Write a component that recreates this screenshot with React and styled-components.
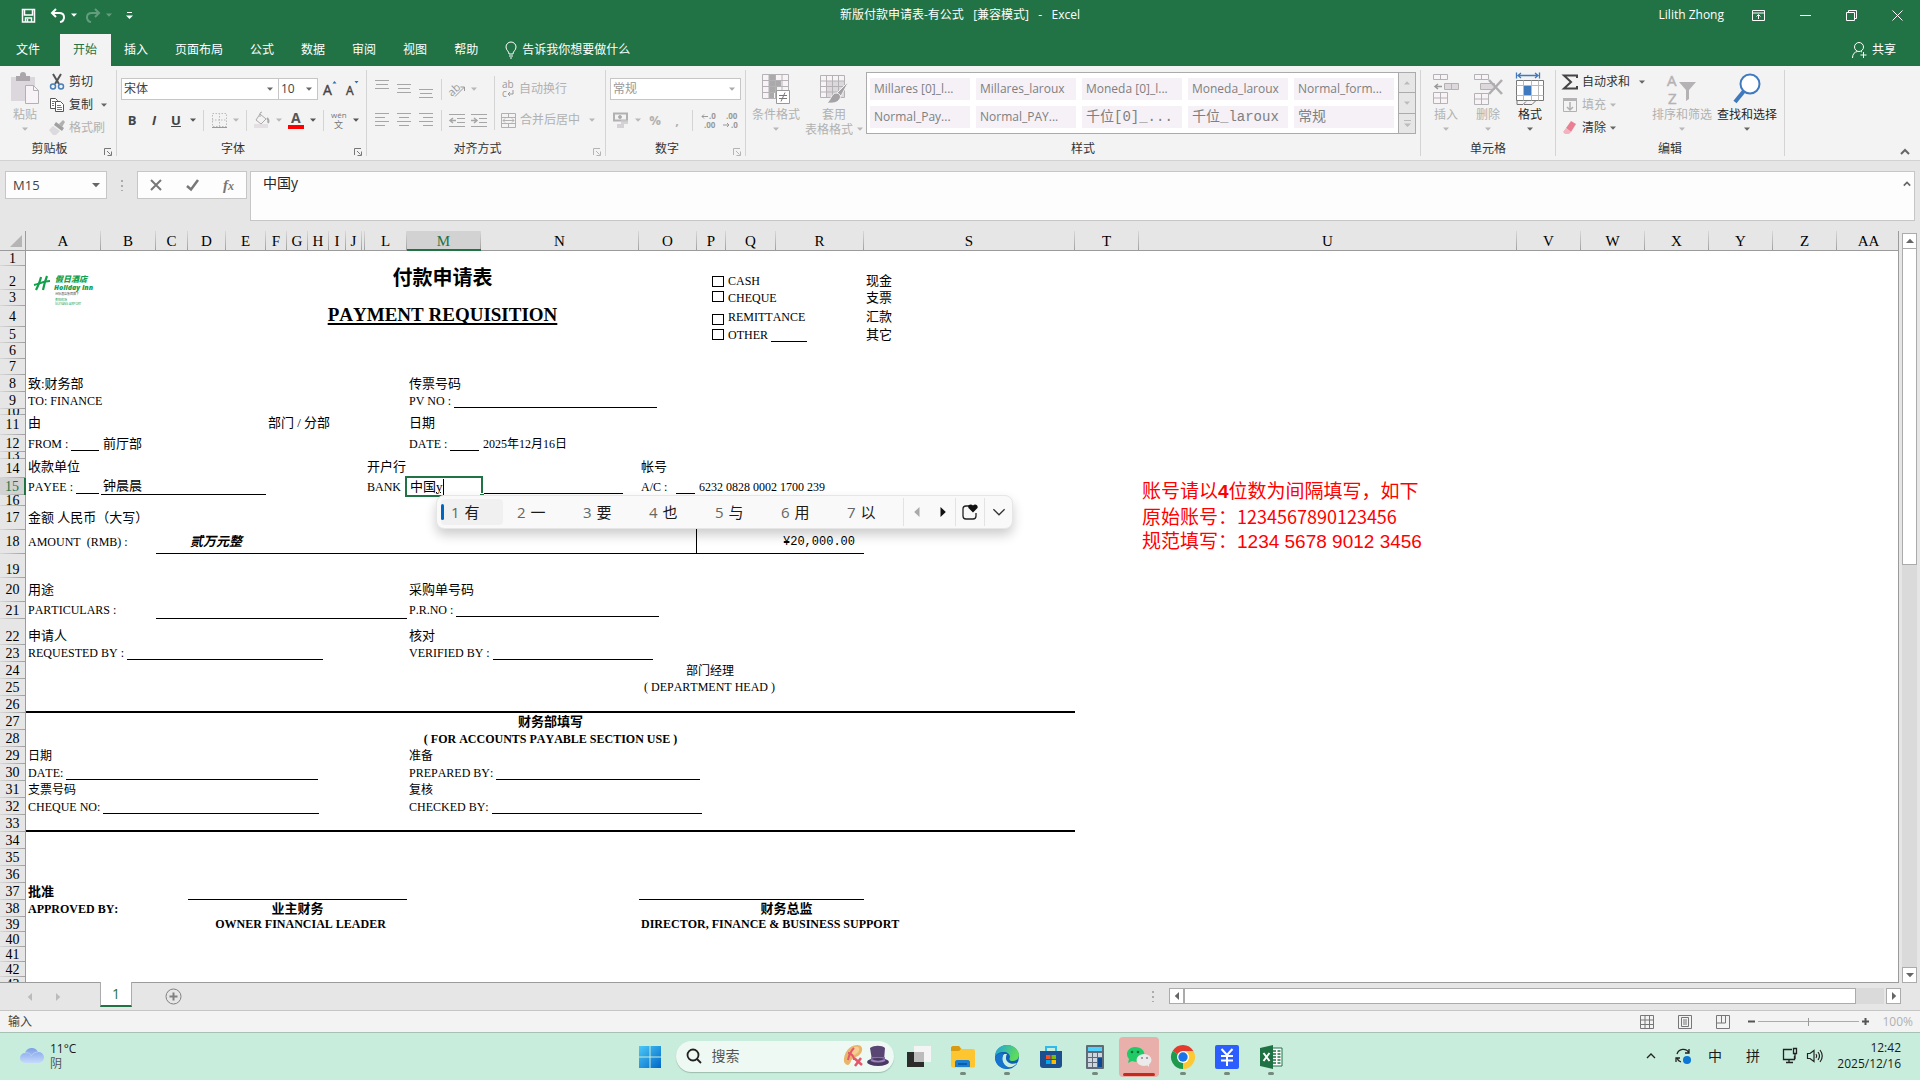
import React from "react";
import styled, { createGlobalStyle, css } from "styled-components";

const ui = `"Open Sans", "Noto Sans CJK SC", sans-serif`;
const serif = `"Liberation Serif", "Noto Sans CJK SC", serif`;
const mono = `"Liberation Mono", "Noto Sans CJK SC", monospace`;

const GlobalStyle = createGlobalStyle`
  *, *::before, *::after { box-sizing: border-box; }
  body { margin: 0; font: 12px/16px ${ui}; color: #262626; overflow: hidden; }
  button { font: inherit; color: inherit; padding: 0; border: 0; background: none; }
  input, select, textarea { font: inherit; color: inherit; border: 0; padding: 0; margin: 0; background: none; outline: 0; }
  select { appearance: none; }
  svg { display: block; flex: none; overflow: visible; }
`;

const Window = styled.div`
  display: flex;
  flex-direction: column;
  height: 100vh;
`;

/* ---------- title bar and tabs ---------- */

const TitleBar = styled.header`
  display: grid;
  grid-template-columns: 1fr auto 1fr;
  align-items: center;
  height: 34px;
  padding: 0 17px 4px;
  background: #217346;
  color: #fff;
`;

const QuickTools = styled.div`
  display: flex;
  align-items: center;
  gap: ${pr => pr.gap}px;
  padding-left: 4px;
  justify-content: ${pr => (pr.end ? "flex-end" : "flex-start")};
`;

const QuickButton = styled.button`
  display: flex;
  align-items: center;
  gap: 5px;
  ${pr => pr.faded && css`opacity: 0.3; margin-left: -6px;`}
`;

const UserName = styled.span`
  margin-right: -7px;
`;

const DocTitle = styled.h1`
  margin: 0;
  font-size: 12px;
  font-weight: 400;
  white-space: pre;
`;

const TabBar = styled.nav`
  display: flex;
  align-items: stretch;
  height: 32px;
  padding-left: 3px;
  background: #217346;
  color: #fff;
`;

const Tab = styled.button`
  padding: 0 14px 1px 13px;
  ${pr => pr.first && css`margin-right: 6px;`}
  ${pr => pr.active && css`background: #f3f3f3; color: #217346;`}
`;

const TellMe = styled.button`
  display: flex;
  align-items: center;
  gap: 5px;
  margin-left: 13px;
`;

const Share = styled(TellMe)`
  margin-left: auto;
  margin-right: 24px;
`;

/* ---------- ribbon ---------- */

const Ribbon = styled.div`
  display: flex;
  height: 95px;
  background: #f3f3f3;
  border-bottom: 1px solid #d2d2d2;
`;

const Group = styled.section`
  display: flex;
  flex-direction: column;
  position: relative;
  width: ${pr => pr.w}px;
  margin: 4px 0;
  border-right: 1px solid #d4d4d4;
`;

const GroupBody = styled.div`
  display: flex;
  flex: none;
  height: 71px;
  padding-left: ${pr => pr.pad || 4}px;
`;

const GroupLabel = styled.div`
  display: flex;
  justify-content: center;
  padding-right: ${pr => (pr.launch ? 17 : 0)}px;
  color: #333;
`;

const Launcher = styled.button`
  position: absolute;
  right: 4px;
  bottom: 0;
  opacity: ${pr => (pr.off ? 0.5 : 1)};
`;

const Rows = styled.div`
  display: flex;
  flex-direction: column;
  gap: 9px;
  padding-top: 8px;
`;

const ToolRow = styled.div`
  display: flex;
  align-items: center;
  height: 22px;
`;

const Tool = styled.button`
  display: flex;
  align-items: center;
  justify-content: center;
  width: 22px;
  height: 22px;
  color: ${pr => (pr.off ? "#b1b1b1" : "#444")};
  font-size: ${pr => (pr.bold ? 13 : 14)}px;
  font-weight: ${pr => (pr.bold ? 700 : 400)};
  font-style: ${pr => (pr.italic ? "italic" : "normal")};
  text-decoration: ${pr => (pr.under ? "underline" : "none")};
`;

const DropBox = styled.button`
  display: flex;
  align-items: center;
  justify-content: center;
  width: 12px;
  height: 12px;
`;

const Sep = styled.span`
  width: 1px;
  height: ${pr => pr.h || 21}px;
  margin: ${pr => pr.m || "0 4px"};
  background: #d4d4d4;
`;

const Combo = styled.label`
  display: flex;
  align-items: center;
  width: ${pr => pr.w}px;
  height: 22px;
  padding: 0 5px 0 2px;
  margin-left: ${pr => (pr.joined ? -1 : 0)}px;
  border: 1px solid #c6c6c6;
  background: #fff;
  color: ${pr => (pr.off ? "#999" : "#444")};

  select { flex: 1; min-width: 0; }
`;

const Stack = styled.div`
  display: flex;
  flex-direction: column;
  width: ${pr => pr.w}px;
  margin-left: ${pr => (pr.spaced ? 3 : 0)}px;
`;

const SmallButton = styled.button`
  display: flex;
  align-items: center;
  gap: 4px;
  height: ${pr => pr.h || 23}px;
  color: ${pr => (pr.off ? "#b1b1b1" : "#333")};
  white-space: nowrap;

  span { margin-right: ${pr => pr.push || 0}px; }
`;

const BigButton = styled.button`
  display: flex;
  flex-direction: column;
  align-items: center;
  width: ${pr => pr.w}px;
  color: ${pr => (pr.off ? "#b1b1b1" : "#262626")};
  line-height: 15px;
  white-space: nowrap;
`;

const BigIcon = styled.span`
  display: flex;
  align-items: center;
  height: 33px;
  margin: 2px 0;
`;

const ArrowLine = styled.span`
  display: flex;
  align-items: center;
  gap: 4px;
  height: 14px;
`;

const Gallery = styled.div`
  display: grid;
  grid-template-columns: repeat(5, 100px) 16px;
  grid-template-rows: 22px 22px;
  gap: 6px;
  width: 548px;
  height: 62px;
  margin: 2px 0 0 2px;
  padding: 5px 0 0 3px;
  border: 1px solid #ababab;
  background: #fff;
`;

const StyleCell = styled.button`
  padding-left: 4px;
  background: #f5f1f7;
  color: #7f7f7f;
  text-align: left;
  white-space: pre;
  ${pr => pr.song && css`font: 14px/20px ${mono};`}
`;

const GalleryScroll = styled.div`
  display: flex;
  flex-direction: column;
  grid-column: 6;
  grid-row: 1 / 3;
  height: 62px;
  margin: -6px 0 0 -2px;
  border: 1px solid #ababab;
  background: #e6e6e6;

  button {
    display: flex;
    flex: 1;
    align-items: center;
    justify-content: center;
    border-bottom: 1px solid #ababab;
  }
  button:last-child { border-bottom: 0; }
`;

const CollapseButton = styled.button`
  display: flex;
  align-self: flex-end;
  margin: 0 10px 3px auto;
`;

/* ---------- formula bar ---------- */

const FormulaBar = styled.div`
  display: flex;
  align-items: flex-start;
  height: 70px;
  padding: 10px 5px 0;
  background: #e6e6e6;
`;

const NameBox = styled.label`
  display: flex;
  align-items: center;
  width: 102px;
  height: 28px;
  padding: 0 6px 0 7px;
  border: 1px solid #c6c6c6;
  background: #fdfdfd;
  color: #444;

  input { flex: 1; min-width: 0; font-size: 13px; }
`;

const Dots = styled.span`
  width: 2px;
  height: 11px;
  margin: ${pr => pr.m};
  background: repeating-linear-gradient(#ababab 0 2px, transparent 2px 5px);
`;

const FormulaButtons = styled.div`
  display: flex;
  align-items: center;
  justify-content: space-around;
  width: 110px;
  height: 28px;
  border: 1px solid #c6c6c6;
  background: #fdfdfd;
`;

const FxButton = styled.button`
  font: italic 700 15px/20px "Liberation Serif", serif;
  color: #777;
  sub { font-size: 12px; vertical-align: baseline; }
`;

const FormulaInput = styled.div`
  display: flex;
  flex: 1;
  height: 50px;
  margin-left: 3px;
  padding: 1px 3px 0 12px;
  border: 1px solid #c6c6c6;
  background: #fdfdfd;

  textarea { flex: 1; resize: none; font-size: 14px; line-height: 20px; overflow: hidden; }
  button { align-self: flex-start; margin-top: 7px; }
`;

/* ---------- sheet ---------- */

const SheetArea = styled.div`
  display: flex;
  flex: 1;
  min-height: 0;
  background: #e6e6e6;
`;

const SheetView = styled.main`
  flex: 1;
  min-width: 0;
  overflow: hidden;
  border-right: 1px solid #9b9b9b;
  border-bottom: 1px solid #9b9b9b;
  background: linear-gradient(#e6e6e6 20px, #fff 20px);
`;

const Grid = styled.table`
  table-layout: fixed;
  border-collapse: collapse;
  font-family: ${serif};
  font-kerning: none;
  color: #000;

  td, th { padding: 0; font-weight: 400; }
  td { position: relative; }
`;

const ColHead = styled.div`
  height: 20px;
  padding-right: 1px;
  border-bottom: ${pr => (pr.active ? "2px solid #217346" : "1px solid #9b9b9b")};
  background: linear-gradient(#d8d8d8, #a0a0a0) right / 1px 100% no-repeat ${pr => (pr.active ? "#d2d2d2" : "#e6e6e6")};
  color: ${pr => (pr.active ? "#217346" : "#000")};
  font-size: 15px;
  line-height: 21px;
  text-align: center;
`;

const Corner = styled.div`
  display: flex;
  align-items: flex-end;
  justify-content: flex-end;
  height: 20px;
  padding: 0 3px 3px 0;
  border-right: 1px solid #9b9b9b;
  border-bottom: 1px solid #9b9b9b;
  background: #e6e6e6;
`;

const RowHead = styled.div`
  display: flex;
  align-items: ${pr => (pr.low ? "flex-end" : "center")};
  justify-content: center;
  height: ${pr => pr.h}px;
  overflow: hidden;
  border-right: ${pr => (pr.active ? "2px solid #217346" : "1px solid #9b9b9b")};
  background: linear-gradient(90deg, #d8d8d8, #a0a0a0) bottom / 100% 1px no-repeat ${pr => (pr.active ? "#d2d2d2" : "#e6e6e6")};
  color: ${pr => (pr.active ? "#217346" : "#000")};
  font-size: 14px;
  line-height: 16px;
`;

const Cell = styled.div`
  display: flex;
  align-items: ${pr => (pr.low ? "flex-end" : "center")};
  justify-content: ${pr => pr.align || "flex-start"};
  height: ${pr => pr.h}px;
  padding: 0 ${pr => (pr.money ? 9 : 2)}px ${pr => pr.lift || 0}px;
  border-bottom: ${pr => pr.line || 0}px solid #000;
  border-right: ${pr => (pr.edge ? 1 : 0)}px solid #000;
  font-size: 12px;
  line-height: 16px;
  font-weight: ${pr => (pr.bold ? 700 : 400)};
  font-style: ${pr => (pr.italic ? "italic" : "normal")};
  white-space: pre;
  ${pr => pr.cn && css`font-size: 13px;`}
  ${pr => pr.money && css`font-family: ${mono};`}
  ${pr => pr.title && css`font-size: 20px; font-weight: 700;`}
  ${pr => pr.subtitle && css`
    font-size: 19px;
    font-weight: 700;
    text-decoration: underline 2px;
    text-underline-offset: 2px;
    text-decoration-skip-ink: none;
  `}
`;

/* writing line after a label; fills the cell when no length is given */
const Blank = styled.span`
  flex: ${pr => (pr.fill ? "1" : "none")};
  align-self: flex-end;
  height: 1px;
  margin-bottom: 1px;
  background: #000;
`;

const Tick = styled.input`
  appearance: none;
  width: 12px;
  height: 11px;
  margin: 0 0 2px;
  border: 1px solid #000;
  background: #fff;
`;

const Editing = styled.div`
  position: absolute;
  inset: -2px;
  z-index: 2;
  display: flex;
  align-items: center;
  padding-left: 3px;
  border: 2px solid #217346;
  background: #fff;
  font-size: 13px;
  line-height: 16px;

  u { text-decoration: underline dotted 1px; border-right: 1px solid #000; }
`;

const FillHandle = styled.span`
  position: absolute;
  right: -3px;
  bottom: -2px;
  width: 5px;
  height: 4px;
  border: 1px solid #fff;
  border-width: 1px 0 0 1px;
  background: #217346;
`;

const Logo = styled.svg`
  position: absolute;
  left: 8px;
  top: 9px;
`;

const RedNote = styled.div`
  position: absolute;
  left: 3px;
  top: 2px;
  z-index: 1;
  color: #f00;
  font: 19px/24px "Liberation Sans", "Noto Sans CJK SC", sans-serif;
  white-space: nowrap;

  p { margin: 0; }
  span { font-family: "Noto Sans CJK SC", sans-serif; font-size: 18px; }
`;

/* input method candidate window */
const Candidates = styled.div`
  position: absolute;
  left: 29px;
  top: 17px;
  z-index: 3;
  display: flex;
  align-items: center;
  width: 577px;
  height: 34px;
  padding-left: 4px;
  border-radius: 8px;
  background: #f9f9f9;
  border: 1px solid #e6e6e6;
  box-shadow: 0 6px 12px rgba(0, 0, 0, 0.2);
  color: #1a1a1a;
  font: 15px/20px ${ui};
`;

const Candidate = styled.button`
  display: flex;
  flex: none;
  align-items: center;
  gap: 5px;
  width: 62px;
  height: 26px;
  margin-right: 4px;
  padding-left: ${pr => (pr.active ? 0 : 10)}px;
  border-radius: 4px;
  background: ${pr => (pr.active ? "#f0f0f0" : "none")};

  i { color: #666; font-style: normal; }
  ${pr => pr.active && css`
    &::before { content: ""; width: 3px; height: 16px; margin-right: 2px; border-radius: 2px; background: #0067c0; }
  `}
`;

const CandidateTool = styled.button`
  display: flex;
  align-items: center;
  justify-content: center;
  width: ${pr => pr.w}px;
  height: 28px;
  border-left: ${pr => (pr.lined ? 1 : 0)}px solid #e3e3e3;
`;

const VScroll = styled.div`
  display: flex;
  flex-direction: column;
  width: 15px;
  margin: 2px 3px 0 3px;
`;

const ScrollButton = styled.button`
  display: flex;
  align-items: center;
  justify-content: center;
  width: 15px;
  height: 16px;
  border: 1px solid #ababab;
  background: #fff;
`;

const VTrack = styled.div`
  flex: 1;
  background: #dadada;

  div { height: 44%; border: 1px solid #ababab; border-top: 0; background: #fff; }
`;

/* ---------- sheet tabs and status ---------- */

const SheetTabs = styled.div`
  display: flex;
  height: 27px;
  padding-left: 26px;
  background: #e6e6e6;
`;

const SheetNav = styled.div`
  display: flex;
  gap: 20px;
  align-items: center;
  width: 74px;
`;

const SheetTab = styled.button`
  width: 32px;
  height: 25px;
  margin-top: -1px;
  border: 1px solid #ababab;
  border-top: 0;
  border-bottom: 2px solid #217346;
  background: #fff;
  color: #217346;
  font-size: 14px;
`;

const AddSheet = styled.button`
  display: flex;
  align-items: center;
  margin-left: 33px;
`;

const HScroll = styled.div`
  display: flex;
  width: 732px;
  height: 16px;
  margin: 5px 19px 0 15px;

  button:last-child { margin-left: 2px; }
`;

const HTrack = styled.div`
  flex: 1;
  background: #dadada;

  div { width: 96%; height: 16px; border: 1px solid #ababab; background: #fff; }
`;

const StatusBar = styled.footer`
  display: flex;
  align-items: center;
  height: 22px;
  padding: 0 7px 0 8px;
  border-top: 1px solid #c6c6c6;
  background: #f3f3f3;
  color: #444;
`;

const ViewButtons = styled.div`
  display: flex;
  gap: 24px;
  margin: 0 18px 0 auto;
`;

const ZoomSlider = styled.input`
  appearance: none;
  width: 101px;
  height: 8px;
  margin: 0 3px;
  background:
    linear-gradient(#999, #999) center / 1px 8px no-repeat,
    linear-gradient(#ababab, #ababab) center / 100% 1px no-repeat;

  &::-webkit-slider-thumb { appearance: none; width: 1px; height: 8px; background: #999; }
`;

const ZoomValue = styled.span`
  margin-left: 13px;
  color: #b1b1b1;
`;

/* ---------- taskbar ---------- */

const Taskbar = styled.div`
  display: grid;
  grid-template-columns: 1fr auto 1fr;
  height: 48px;
  border-top: 1px solid #a6c2b4;
  background: #c8eddd;
  color: #1a1a1a;
  font-size: 12px;
`;

const Weather = styled.button`
  display: flex;
  align-items: center;
  gap: 6px;
  padding: 0 0 2px 19px;
  line-height: 15px;
  text-align: left;

  small { display: block; font-size: 12px; color: #555; }
`;

const Apps = styled.div`
  display: flex;
  align-items: center;
  padding-left: 10px;
`;

const Search = styled.label`
  display: flex;
  align-items: center;
  width: 218px;
  height: 31px;
  margin: 0 3px 1px 14px;
  padding: 0 5px 0 10px;
  border-radius: 16px;
  background: #eff9f4;
  box-shadow: 0 1px 1px #9cbdae;

  input { flex: 1; min-width: 0; margin-left: 10px; font-size: 14px; }
  input::placeholder { color: #555; opacity: 1; }
`;

const AppButton = styled.button`
  display: flex;
  flex-direction: column;
  align-items: center;
  justify-content: flex-end;
  width: 40px;
  height: 40px;
  margin: 0 2px;
  padding-bottom: ${pr => (pr.alert ? 1 : 2)}px;
  border-radius: 4px;
  background: ${pr => (pr.alert ? "#e8afab" : "none")};

  &::after {
    content: "";
    width: ${pr => (pr.alert ? 32 : 6)}px;
    height: 3px;
    margin-top: ${pr => (pr.alert ? 4 : 3)}px;
    border-radius: 2px;
    background: ${pr => (pr.alert ? "#c42b1c" : pr.open ? "#75897f" : "transparent")};
  }
`;

const Tray = styled.div`
  display: flex;
  align-items: center;
  justify-content: flex-end;
  padding: 0 19px 1px 0;
  font-size: 14px;
`;

const TrayButton = styled.button`
  display: flex;
  align-items: center;
  justify-content: center;
  width: ${pr => pr.w}px;
`;

const Clock = styled.time`
  width: 77px;
  font-size: 12px;
  line-height: 16px;
  text-align: right;
  white-space: pre-line;
`;

/* ---------- icons ---------- */

const Svg = ({ w = 16, h = w, box, children, ...rest }) => (
  <svg width={w} height={h} viewBox={box || `0 0 ${w} ${h}`} fill="none" stroke="currentColor" aria-hidden="true" {...rest}>
    {children}
  </svg>
);

const turns = { down: 0, left: 90, up: 180, right: 270 };

const Arrow = ({ dir = "down", color = "#666", s = 6 }) => (
  <Svg w={s} box="0 0 6 6">
    <path d="M0 1.500h6L3 4.700z" fill={color} stroke="none" transform={`rotate(${turns[dir]} 3 3)`} />
  </Svg>
);

const Drop = ({ off }) => (
  <DropBox aria-label="更多"><Arrow color={off ? "#b8b8b8" : "#555"} /></DropBox>
);

const Chevron = ({ up, s = 10, color = "#666", sw = 1.5 }) => (
  <Svg w={s} box="0 0 10 10" stroke={color} strokeWidth={sw}>
    <path d={up ? "M1 7l4-4 4 4" : "M1 3l4 4 4-4"} />
  </Svg>
);

const LaunchIcon = () => (
  <Svg w={8} stroke="#777"><path d="M.5 7V.5H7M3 3l3.500 3.500M7.500 3.500v4h-4" /></Svg>
);

const SaveIcon = () => (
  <Svg w={15} h={15} stroke="#fff" strokeWidth="1.500">
    <path d="M1.500 1.500h12v12.500h-12zM3.500 1.500v5.500h8V1.500M4.500 14v-4h6v4" />
    <path d="M6.500 11v3" />
  </Svg>
);

const UndoIcon = ({ flip }) => (
  <Svg w={16} h={15} stroke="#fff" strokeWidth="2">
    <g transform={flip ? "matrix(-1 0 0 1 16 0)" : undefined}>
      <path d="M6 1L2 5l4 4M2 5h7c7 0 6 8 1 9" />
    </g>
  </Svg>
);

const BulbIcon = () => (
  <Svg w={12} h={17} stroke="#fff"><path d="M4 12c0-3-3-3.500-3-7a5 5 0 0 1 10 0c0 3.500-3 4-3 7zM4 14h4M5 16h2" /></Svg>
);

const PersonIcon = () => (
  <Svg w={15} h={17} stroke="#fff"><circle cx="7" cy="5" r="4.500" /><path d="M.5 16c0-4 2-6 5-6.500M9 9.500l1 .5M11.500 10v6M8.500 13h6" /></Svg>
);

const PasteIcon = () => (
  <Svg w={28} h={32} stroke="none">
    <path d="M0 4h24v9h-9v15H0z" fill="#dcd7dc" />
    <path d="M5 3h4V2a3 3 0 0 1 6 0v1h4v5H5z" fill="#aaa6aa" />
    <path d="M14.500 12.500h8l5 5v13h-13z" fill="#f7f3f7" stroke="#b3b0b3" />
    <path d="M22.500 12.500v5h5" stroke="#b3b0b3" />
  </Svg>
);

const CutIcon = () => (
  <Svg w={16} stroke="#555" strokeWidth="2">
    <path d="M4 0l6 10M12 0L6 10" />
    <circle cx="4" cy="12.500" r="2.500" stroke="#4a7fb8" strokeWidth="1.500" />
    <circle cx="12" cy="12.500" r="2.500" stroke="#4a7fb8" strokeWidth="1.500" />
  </Svg>
);

const CopyIcon = () => (
  <Svg w={16} stroke="#555">
    <path d="M1.500 1.500h5l2 2v8h-7z" fill="#fff" />
    <path d="M6.500 4.500h5l3 3v7h-8z" fill="#fff" />
    <path d="M3 4.500h3M3 6.500h2M3 8.500h2M8 8.500h4M8 10.500h5M8 12.500h5" stroke="#4a7fb8" />
  </Svg>
);

const BrushIcon = () => (
  <Svg w={16} stroke="none"><path d="M10 4l4-4 2 2-3 5z" fill="#b0b0b0" /><path d="M7 2l8 6-2 3-8-6z" fill="#a0a0a0" /><path d="M4 6l7 5-4 4H4L0 10z" fill="#dcdadc" /></Svg>
);

const LinesIcon = ({ lines, top = 4 }) => (
  <Svg w={14} h={22} stroke="#a6a6a6">
    {lines.map(([x, len], i) => <path key={i} d={`M${x} ${top + i * 4 + 0.5}h${len}`} />)}
  </Svg>
);

const BordersIcon = () => (
  <Svg w={15} h={15} stroke="#bbb" strokeDasharray="1.500 1.500"><path d="M.5 .5h14v13H.5zM7.500 0v14M0 7h15" /><path d="M0 14.500h15" strokeDasharray="none" stroke="#999" /></Svg>
);

const FillIcon = () => (
  <Svg w={16} stroke="#aaa"><path d="M6 2l6 5-5 5-5-4zM6 5V1l2-1" /><path d="M13 6c2 2 2 3 1 5" strokeWidth="2" /><path d="M0 12h14v4H0z" fill="#e3dfe3" stroke="none" /></Svg>
);

const IndentIcon = ({ out }) => (
  <Svg w={16} h={13} stroke="#a6a6a6">
    <path d="M0 .5h16M8 4.500h8M8 8.500h8M0 12.500h16" />
    <path d={out ? "M7 6.500H1M4 4L1 6.500 4 9" : "M0 6.500h6M3 4l3 2.500L3 9"} strokeWidth="1.500" />
  </Svg>
);

const WrapGlyph = () => (
  <Svg w={14} h={18}>
    <text x="1" y="8" fontSize="10" fill="#999" stroke="none">ab</text>
    <text x="1" y="17" fontSize="10" fill="#999" stroke="none">c</text>
    <path d="M12 10v4H7M9 12l-2 2 2 2" stroke="#999" />
  </Svg>
);

const SlantIcon = () => (
  <Svg w={17}><text x="-1" y="12" fontSize="11" fill="#999" stroke="none" transform="rotate(-42 6 9)">ab</text><path d="M6 15.500L15.500 6M11.500 6h4v4" stroke="#999" /></Svg>
);

const MergeIcon = () => (
  <Svg w={15} h={15}><path d="M.5 .5h14v14H.5zM.5 4.500h14M.5 10.500h14M7.500 0v4M7.500 11v4M2 7.500h11M4 5.500l-2 2 2 2M11 5.500l2 2-2 2" /></Svg>
);

const MoneyIcon = () => (
  <Svg w={16}><path d="M1 1.500h13v7H1z" strokeWidth="2" /><circle cx="7" cy="5" r="1.500" fill="#aaa" /><path d="M8 9h7M8 11h7M4 13h7M4 15h7" stroke="#ccc7cc" strokeWidth="1.500" /></Svg>
);

const DecimalIcon = ({ less }) => (
  <Svg w={15} h={15}>
    <text x={less ? 3 : 8} y="6" fontSize="8" fontWeight="700" fill="#999" stroke="none">{less ? ".00" : ".0"}</text>
    <text x={less ? 8 : 3} y="15" fontSize="8" fontWeight="700" fill="#999" stroke="none">{less ? ".0" : ".00"}</text>
    <path d={less ? "M0 12h6M4 10l2 2-2 2" : "M7 3.500H1M3 1.500l-2 2 2 2"} stroke="#999" />
  </Svg>
);

const GrowIcon = ({ small }) => (
  <Svg w={15} h={16}>
    <text x={small ? 2 : 1} y="14" fontSize={small ? 12 : 14} fill="#444" stroke="#444" strokeWidth=".4">A</text>
    <path d={small ? "M10.500 0h4l-2 2.500z" : "M10.500 2.500h4l-2-2.500z"} fill="#2f6fb3" stroke="none" />
  </Svg>
);

const PinyinIcon = () => (
  <Svg w={18} h={20}>
    <text x="1" y="8" fontSize="8" fill="#777" stroke="none">wén</text>
    <text x="4" y="18" fontSize="9" fill="#777" stroke="none">文</text>
  </Svg>
);

const CondIcon = () => (
  <Svg w={30} h={32} stroke="#b5b2b5">
    <path d="M1.500 1.500h26v24h-26z" fill="#f7f3f7" />
    <path d="M8 2h6v6H8zM8 8h12v6H8zM8 14h8v6H8zM8 20h5v5H8z" fill="#aaa" stroke="none" />
    <path d="M1.500 7.500h26M1.500 13.500h26M1.500 19.500h26M8 1.500v24M14.500 1.500v24M21 1.500v24" />
    <path d="M15.500 17.500h13v13h-13z" fill="#fff" stroke="#999" />
    <path d="M18 22.500h8M18 25.500h8M24 19.500l-4 9" stroke="#777" />
  </Svg>
);

const TableFormatIcon = () => (
  <Svg w={30} h={30} stroke="#b5b2b5">
    <path d="M1.500 1.500h24v22h-24z" fill="#f7f3f7" />
    <path d="M7 7h18v16H7z" fill="#dcd8dc" stroke="none" />
    <path d="M1.500 7h24M1.500 12.500h24M1.500 18h24M7.500 1.500v22M13.500 1.500v22M19.500 1.500v22" />
    <path d="M30 7l-8 15-4-3z" fill="#a5a2a5" stroke="#f3f3f3" />
    <path d="M17 19c4 0 6 4 3 7-3 4-9 3-12 3 4-3 4-9 9-10z" fill="#a5a2a5" stroke="#f3f3f3" />
  </Svg>
);

const InsertCells = () => (
  <Svg w={28} h={32} stroke="#b5b2b5" fill="#f7f3f7">
    <path d="M1.500 1.500h14v5h-14zM8.500 1.500v5M1.500 19.500h14v11h-14zM8.500 19.500v11M1.500 25h14" />
    <path d="M12.500 10.500h14v6h-14zM19.500 10.500v6" fill="#dcd8dc" />
    <path d="M10 13.500H3M6 11l-3 2.500L6 16" stroke="#999" strokeWidth="1.500" fill="none" />
  </Svg>
);

const DeleteCells = () => (
  <Svg w={30} h={32} stroke="#b5b2b5" fill="#f7f3f7">
    <path d="M1.500 1.500h14v5h-14zM8.500 1.500v5M1.500 20.500h14v11h-14zM8.500 20.500v11M1.500 26h14" />
    <path d="M7.500 10.500h14v6h-14z" fill="#dcd8dc" />
    <path d="M16 7l13 14M29 7L16 21" stroke="#b0adb0" strokeWidth="2.500" />
  </Svg>
);

const FormatCells = () => (
  <Svg w={28} h={34} stroke="#777" fill="#fff">
    <path d="M.5 .5v6M23.500 .5v6M2 3.500h20M5 1L2 3.500 5 6M19 1l3 2.500L19 6" stroke="#3f7abf" fill="none" strokeWidth="1.300" />
    <path d="M.5 8.500h27v20H.5z" />
    <path d="M.5 13.500h27M.5 23.500h27M7.500 8.500v20M15.500 8.500v20M22.500 8.500v20" stroke="#bbb" />
    <path d="M8 14h7v9H8z" fill="#3f7abf" stroke="none" />
    <path d="M1 28.500v4h6l3-3M8 32.500h8l4-4" fill="none" />
  </Svg>
);

const SumIcon = () => (
  <Svg w={16} stroke="#444" strokeWidth="2"><path d="M15 4V1.500H2L9 8l-7 6.500h13V12" /></Svg>
);

const FillDownIcon = () => (
  <Svg w={16}><path d="M1.500 1.500h13v13h-13z" /><path d="M1 1h14v3H1z" fill="#b5b2b5" stroke="none" /><path d="M8 5v8M5 10l3 3 3-3" strokeWidth="1.500" /></Svg>
);

const EraserIcon = () => (
  <Svg w={16} stroke="none"><path d="M9 1l5 3-5 8-5-4z" fill="#ea7f93" /><path d="M4 8l5 4-2 2H3l-2-2z" fill="#f3b2bd" /></Svg>
);

const SortIcon = () => (
  <Svg w={30} h={32}>
    <text x="0" y="13" fontSize="15" fill="#b5b2b5" stroke="#b5b2b5" strokeWidth=".5">A</text>
    <text x="1" y="31" fontSize="15" fill="#b5b2b5" stroke="#b5b2b5" strokeWidth=".5">Z</text>
    <path d="M12 9h17l-7 8v9l-3 2V17z" fill="#b5b2b5" stroke="none" />
  </Svg>
);

const FindIcon = () => (
  <Svg w={28} h={32} stroke="#3f7abf"><circle cx="17" cy="11" r="9.500" fill="#fff" strokeWidth="2" /><path d="M11 18L2 29" strokeWidth="4" /></Svg>
);

const ViewIcon = ({ kind }) => (
  <Svg w={14} h={14} stroke="#777">
    <path d={{
      grid: "M.5 .5h13v13H.5zM5 0v14M9.500 0v14M0 5h14M0 9.500h14",
      page: "M.5 .5h13v13H.5zM3.500 2.500h7v9h-7zM5 5h4M5 7h4M5 9h4",
      split: "M.5 .5h13v13H.5zM5.500 0v8M9.500 0v8H1"
    }[kind]} />
  </Svg>
);

const CloudIcon = () => (
  <Svg w={25} h={17} stroke="none">
    <defs><linearGradient id="cloud" x2="0" y2="1"><stop stopColor="#7d9fea" /><stop offset="1" stopColor="#c6dafa" /></linearGradient></defs>
    <path d="M6 16a5 5 0 0 1 0-10 7 7 0 0 1 13-1 5.500 5.500 0 0 1 1 11z" fill="url(#cloud)" />
    <path d="M6 6c3-1 6 1 6 3 2-3 5-4 7-4" stroke="#b4ccf7" />
  </Svg>
);

const HatsIcon = () => (
  <Svg w={46} h={24} stroke="none">
    <path d="M1 18C0 10 6 1 14 1c6 0 6 5 4 8-3 5-8 3-10 8-1 4-4 6-7 1z" fill="#e8b56b" />
    <path d="M6 9c2-4 6-7 9-6 3 2 0 7-4 8z" fill="#f4cf91" />
    <path d="M5 9c3 0 6 3 6 7M11 4c-3 3-5 7-6 12" stroke="#e4576b" strokeWidth="2" />
    <path d="M11 14l8 7M18 14l-6 8" stroke="#e4576b" strokeWidth="2.500" />
    <path d="M27 4c4-3 12-3 15 0l-1 12H29z" fill="#5a4673" />
    <path d="M28 13h14v4H28z" fill="#8a6fb0" />
    <ellipse cx="35" cy="18" rx="11" ry="4" fill="#4a3a61" />
    <path d="M28 16c4 2 10 2 14 0" stroke="#9b84bd" strokeWidth="2" />
  </Svg>
);

const StartIcon = () => (
  <Svg w={24} stroke="none">
    <defs><linearGradient id="win" x2="1" y2="1"><stop stopColor="#4cc9f7" /><stop offset="1" stopColor="#0067c8" /></linearGradient></defs>
    <path d="M1 1h10.500v10.500H1zM12.500 1H23v10.500H12.500zM1 12.500h10.500V23H1zM12.500 12.500H23V23H12.500z" fill="url(#win)" />
  </Svg>
);

const TaskViewIcon = () => (
  <Svg w={24} stroke="none"><path d="M0 7h17v15H0z" fill="#2b2b2b" /><path d="M7 1h17v16H7z" fill="#f4f4f4" /><path d="M7 7h10v10H7z" fill="#bcbcbc" /></Svg>
);

const ExplorerIcon = () => (
  <Svg w={24} stroke="none">
    <path d="M0 3c0-1 1-2 2-2h6l3 3h11c1 0 2 1 2 2v15c0 1-1 1.500-2 1.500H2c-1 0-2-1-2-2z" fill="#fdc52f" />
    <path d="M0 3c0-1 1-2 2-2h6l2 3-2 2H0z" fill="#d89a10" />
    <path d="M4 22v-5c0-1 1-2 2-2h11c1 0 2 1 2 2v5z" fill="#1b7fd2" />
    <path d="M7 18h9v2H7z" fill="#0b5cab" />
  </Svg>
);

const EdgeIcon = () => (
  <Svg w={24} stroke="none">
    <defs><linearGradient id="edge" x2="1" y2=".4"><stop stopColor="#1ba1e2" /><stop offset="1" stopColor="#5fdc58" /></linearGradient></defs>
    <circle cx="12" cy="12" r="12" fill="#0f5fb5" />
    <path d="M0 12C0 5 5 0 12 0c7 0 12 5 12 10 0 4-3 6-6 6-4 0-4-2-3-4 0-3-3-5-6-5-5 0-8 2-9 5z" fill="url(#edge)" />
    <path d="M9 9c-3 3-3 10 4 13 3 1 7-1 9-4-5 2-10 0-11-4 0-2 0-3 1-5z" fill="#c8eddd" />
    <path d="M9 9c-3 3-2 11 5 14-8 2-14-4-14-10 1-4 6-6 9-4z" fill="#1674cf" />
  </Svg>
);

const StoreIcon = () => (
  <Svg w={24} stroke="none">
    <path d="M7 6V2h10v4" stroke="#2fb9ec" strokeWidth="2" />
    <path d="M1 6h22v14c0 2-1 3-3 3H4c-2 0-3-1-3-3z" fill="#1b4f8f" />
    <path d="M7 10h4.500v4H7z" fill="#f25022" /><path d="M12.500 10H17v4h-4.500z" fill="#7fba00" />
    <path d="M7 15h4.500v4H7z" fill="#00a4ef" /><path d="M12.500 15H17v4h-4.500z" fill="#ffb900" />
  </Svg>
);

const CalcIcon = () => (
  <Svg w={24} stroke="none">
    <rect x="3" width="18" height="24" rx="1" fill="#5f6c78" />
    <path d="M5 2h14v4H5z" fill="#4cd2fb" />
    <path d="M5 8h4v4H5zM10 8h4v4h-4zM15 8h4v4h-4zM5 13h4v4H5zM10 13h4v4h-4zM5 18h4v4H5zM10 18h4v4h-4z" fill="#cdd6de" />
    <path d="M15 13h4v9h-4z" fill="#0b4a92" />
  </Svg>
);

const WeChatIcon = () => (
  <Svg w={26} h={24} stroke="none">
    <path d="M2 18l1-4C-2 8 3 2 9 2s11 4 9 10c-1 4-8 6-12 4z" fill="#1fcb66" />
    <circle cx="6" cy="7" r="1.300" fill="#0a6a33" /><circle cx="12" cy="7" r="1.300" fill="#0a6a33" />
    <ellipse cx="18" cy="15" rx="7.500" ry="6" fill="#ebebeb" /><path d="M20 19l3 3v-4z" fill="#ebebeb" />
    <circle cx="16" cy="13" r="1" fill="#888" /><circle cx="21" cy="13" r="1" fill="#888" />
  </Svg>
);

const ChromeIcon = () => (
  <Svg w={24} stroke="none">
    <path d="M12 12L1.600 6A12 12 0 0 1 22.400 6z" fill="#e33b2e" />
    <path d="M12 12L22.400 6A12 12 0 0 1 12 24z" fill="#fcc934" />
    <path d="M12 12v12A12 12 0 0 1 1.600 6z" fill="#1e9a4c" />
    <path d="M12 6h10.400L12 24l5-9z" fill="#fcc934" />
    <circle cx="12" cy="12" r="6" fill="#fff" /><circle cx="12" cy="12" r="4.700" fill="#1a73e8" />
  </Svg>
);

const YenIcon = () => (
  <Svg w={24} stroke="#fff" strokeWidth="2"><rect width="24" height="24" rx="2" fill="#2b5dff" stroke="none" /><path d="M6.500 4L12 10l5.500-6M12 10v11M6 11h12M6 15.500h12" /></Svg>
);

const ExcelIcon = () => (
  <Svg w={24} stroke="none">
    <path d="M12 3h11v18H12z" fill="#fff" stroke="#1f7244" />
    <path d="M14 6h3M14 9h3M14 12h3M14 15h3M14 18h3M18.500 6h3M18.500 9h3M18.500 12h3M18.500 15h3M18.500 18h3" stroke="#1f7244" strokeWidth="1.500" />
    <path d="M1 3l13-3v24L1 21z" fill="#1f7244" />
    <path d="M4.500 8l6 8M10.500 8l-6 8" stroke="#fff" strokeWidth="2" />
  </Svg>
);

const SyncIcon = () => (
  <Svg w={18} h={18} stroke="#222" strokeWidth="1.300">
    <path d="M3 7a6.500 6.500 0 0 1 12-1M15 2v4h-4M7 15a6 6 0 0 1-4-4M2 15v-4h4" />
    <circle cx="13" cy="13" r="4" fill="#0a78d4" stroke="none" />
  </Svg>
);

const ScreenIcon = () => (
  <Svg w={18} h={18} stroke="#222" strokeWidth="1.300"><path d="M11 2.500H2.500v10h11V9M5 15.500h7M8 12.500v3M12.500 1.500h3v5h-3zM14 7v5" /></Svg>
);

const VolumeIcon = () => (
  <Svg w={18} h={16} stroke="#222" strokeWidth="1.200"><path d="M1.500 5.500h2.500l4-3v11l-4-3H1.500zM10 6q1.500 2 0 4M12 4q3 4 0 8M14 2q4.500 6 0 12" /></Svg>
);

/* ---------- sheet data ---------- */

const COLS = [
  ["A", 75], ["B", 55], ["C", 32], ["D", 38], ["E", 40], ["F", 21], ["G", 21], ["H", 21],
  ["I", 17], ["J", 16], ["K", 3], ["L", 42], ["M", 74], ["N", 158], ["O", 58], ["P", 29],
  ["Q", 50], ["R", 88], ["S", 211], ["T", 64], ["U", 378], ["V", 64], ["W", 64], ["X", 64],
  ["Y", 64], ["Z", 64], ["AA", 64]
];
const colIndex = name => COLS.findIndex(([n]) => n === name);

const ROWS = [
  { h: 15 },
  { h: 24, low: true, lift: 1, cells: {
    A: { logo: true }, D: { t: "付款申请表", span: 12, align: "center", title: true, mid: true, lift: 0 },
    P: { tick: "CASH" }, Q: { t: "CASH" }, S: { t: "现金", cn: true } } },
  { h: 16, lift: 1, cells: { P: { tick: "CHEQUE" }, Q: { t: "CHEQUE" }, S: { t: "支票", cn: true } } },
  { h: 21, cells: {
    D: { t: "PAYMENT REQUISITION", span: 12, align: "center", subtitle: true, lift: 3 },
    P: { tick: "REMITTANCE", low: true }, Q: { t: "REMITTANCE" }, S: { t: "汇款", cn: true } } },
  { h: 16, cells: { P: { tick: "OTHER" }, Q: { t: "OTHER ", blank: 36 }, S: { t: "其它", cn: true } } },
  { h: 16 },
  { h: 16 },
  { h: 17, cells: { A: { t: "致:财务部", cn: true }, M: { t: "传票号码", cn: true } } },
  { h: 17, cells: { A: { t: "TO: FINANCE" }, M: { t: "PV NO : ", blank: 203 } } },
  { h: 6 },
  { h: 20, lift: 4, cells: { A: { t: "由", cn: true }, F: { t: "部门 / 分部", cn: true }, M: { t: "日期", cn: true } } },
  { h: 17, cells: {
    A: { t: "FROM : ", blank: "fill" }, B: { t: "前厅部", cn: true },
    M: { t: "DATE : ", blank: "fill" }, N: { t: "2025年12月16日" } } },
  { h: 7 },
  { h: 19, lift: 3, cells: { A: { t: "收款单位", cn: true }, L: { t: "开户行", cn: true }, O: { t: "帐号", cn: true } } },
  { h: 17, lines: ["B", "E", 1], cells: {
    A: { t: "PAYEE : ", blank: "fill" }, B: { t: "钟晨晨", cn: true }, L: { t: "BANK" },
    M: { edit: true }, N: { blank: 140 }, O: { t: "A/C :   ", blank: "fill" },
    P: { t: "6232 0828 0002 1700 239" }, U: { note: true } } },
  { h: 11 },
  { h: 24, edge: true, cells: { A: { t: "金额 人民币（大写）", cn: true } } },
  { h: 24, edge: true, lines: ["C", "R", 1], cells: {
    A: { t: "AMOUNT  (RMB) :" }, D: { t: "贰万元整", cn: true, bold: true, italic: true },
    R: { t: "¥20,000.00", align: "flex-end", money: true } } },
  { h: 24, low: true },
  { h: 24, cells: { A: { t: "用途", cn: true }, M: { t: "采购单号码", cn: true } } },
  { h: 17, lift: 1, lines: ["C", "L", 1], cells: { A: { t: "PARTICULARS :" }, M: { t: "P.R.NO : ", blank: 203 } } },
  { h: 26, low: true, lift: 1, cells: { A: { t: "申请人", cn: true }, M: { t: "核对", cn: true } } },
  { h: 17, lift: 1, cells: { A: { t: "REQUESTED BY : ", blank: 196 }, M: { t: "VERIFIED BY : ", blank: 160 } } },
  { h: 17, cells: { O: { t: " ".repeat(15) + "部门经理" } } },
  { h: 17, lift: 1, cells: { O: { t: " ( DEPARTMENT HEAD )" } } },
  { h: 17, lines: ["A", "S", 2] },
  { h: 17, cells: { A: { t: "财务部填写", span: 19, align: "center", cn: true, bold: true } } },
  { h: 17, cells: { A: { t: "( FOR ACCOUNTS PAYABLE SECTION USE )", span: 19, align: "center", bold: true } } },
  { h: 17, cells: { A: { t: "日期" }, M: { t: "准备" } } },
  { h: 17, cells: { A: { t: "DATE: ", blank: 252 }, M: { t: "PREPARED BY: ", blank: 204 } } },
  { h: 17, cells: { A: { t: "支票号码" }, M: { t: "复核" } } },
  { h: 17, cells: { A: { t: "CHEQUE NO: ", blank: 216 }, M: { t: "CHECKED BY: ", blank: 210 } } },
  { h: 17, lines: ["A", "S", 2] },
  { h: 17 },
  { h: 17 },
  { h: 17 },
  { h: 17, lines: [["D", "L", 1], ["O", "R", 1]], cells: { A: { t: "批准", cn: true, bold: true } } },
  { h: 17, cells: {
    A: { t: "APPROVED BY:", bold: true },
    D: { t: "业主财务", span: 9, align: "center", cn: true, bold: true },
    Q: { t: " ".repeat(10) + "财务总监", cn: true, bold: true } } },
  { h: 15, lift: 1, cells: {
    D: { t: "  OWNER FINANCIAL LEADER", span: 9, align: "center", bold: true },
    O: { t: "DIRECTOR, FINANCE & BUSINESS SUPPORT", bold: true } } },
  { h: 15 },
  { h: 15 },
  { h: 15 },
  { h: 15 }
];

const lineFor = (row, i) => {
  if (!row.lines) return 0;
  const list = Array.isArray(row.lines[0]) ? row.lines : [row.lines];
  const hit = list.find(([from, to]) => i >= colIndex(from) && i <= colIndex(to));
  return hit ? hit[2] : 0;
};

const HolidayLogo = () => (
  <Logo width="64" height="34" viewBox="0 0 64 34" role="img" aria-label="Holiday Inn">
    <g fill="none" stroke="#12a04c">
      <path d="M7 2C6 7 4 11 2 15M13 1c-2 5-3 9-4 14" strokeWidth="2.200" />
      <path d="M0 10c5-1 10-4 16-4" strokeWidth="1.800" />
    </g>
    <g fontFamily="Open Sans, Noto Sans CJK SC, sans-serif" fill="#12a04c">
      <text x="21" y="7" fontSize="8" fontWeight="900" fontStyle="italic">假日酒店</text>
      <text x="20" y="15" fontSize="7" fontWeight="800" fontStyle="italic">Holiday Inn</text>
      <text x="21" y="20" fontSize="3" fill="#555">洲际酒店集团旗下</text>
      <text x="21" y="26" fontSize="3">贵阳机场</text>
      <text x="21" y="30" fontSize="3">GUIYANG AIRPORT</text>
    </g>
  </Logo>
);

const CandidateWindow = () => (
  <Candidates>
    {["有", "一", "要", "也", "与", "用", "以"].map((word, i) => (
      <Candidate key={word} active={i === 0 ? 1 : undefined}><i>{i + 1}</i>{word}</Candidate>
    ))}
    <CandidateTool w={27} lined={1} aria-label="上一页"><Arrow dir="left" color="#aaa" s={10} /></CandidateTool>
    <CandidateTool w={25} aria-label="下一页"><Arrow dir="right" color="#111" s={10} /></CandidateTool>
    <CandidateTool w={29} lined={1} aria-label="表情">
      <Svg w={16} stroke="#222" strokeWidth="1.300">
        <path d="M7 2H4a3 3 0 0 0-3 3v7a3 3 0 0 0 3 3h7a3 3 0 0 0 3-3V9" />
        <path d="M11 8.500L6.500 4C5 1 9-.5 11 1.500c2-2 5.500-.5 4.500 2.500z" fill="#111" stroke="none" />
      </Svg>
    </CandidateTool>
    <CandidateTool w={28} lined={1} aria-label="展开"><Chevron s={14} color="#333" sw={0.9} /></CandidateTool>
  </Candidates>
);

const SheetCell = ({ row, cell, i }) => {
  const { t, blank, tick, logo, edit, note, span, mid, low, align, ...look } = cell;
  return (
    <td colSpan={span}>
      <Cell
        h={row.h}
        lift={row.lift}
        low={low || (row.low && !mid) ? 1 : undefined}
        align={tick ? "flex-end" : align}
        line={lineFor(row, i)}
        edge={row.edge && COLS[i][0] === "O" ? 1 : undefined}
        {...look}
      >
        {t && <span>{t}</span>}
        {blank === "fill" && <Blank fill={1} />}
        {blank > 0 && <Blank style={{ width: blank }} />}
        {tick && <Tick type="checkbox" aria-label={tick} />}
        {logo && <HolidayLogo />}
      </Cell>
      {edit && <Editing>中国<u>y</u><FillHandle /></Editing>}
      {edit && <CandidateWindow />}
      {note && (
        <RedNote>
          <p>账号请以<b>4</b>位数为间隔填写，如下</p>
          <p>原始账号：<span>1234567890123456</span></p>
          <p>规范填写：1234 5678 9012 3456</p>
        </RedNote>
      )}
    </td>
  );
};

const Sheet = () => (
  <Grid style={{ width: COLS.reduce((sum, [, w]) => sum + w, 26) }}>
    <colgroup>
      <col style={{ width: 26 }} />
      {COLS.map(([name, w]) => <col key={name} style={{ width: w }} />)}
    </colgroup>
    <thead>
      <tr>
        <th><Corner><Svg w={12} stroke="none"><path d="M12 0v12H0z" fill="#b5b5b5" /></Svg></Corner></th>
        {COLS.map(([name]) => (
          <th key={name} scope="col">
            <ColHead active={name === "M" ? 1 : undefined}>{name === "K" ? "" : name}</ColHead>
          </th>
        ))}
      </tr>
    </thead>
    <tbody>
      {ROWS.map((row, r) => {
        const tds = [];
        for (let i = 0; i < COLS.length; i++) {
          const cell = (row.cells && row.cells[COLS[i][0]]) || {};
          tds.push(<SheetCell key={i} row={row} cell={cell} i={i} />);
          if (cell.span) i += cell.span - 1;
        }
        return (
          <tr key={r}>
            <th scope="row">
              <RowHead h={row.h} low={row.low ? 1 : undefined} active={r === 14 ? 1 : undefined}>{r + 1}</RowHead>
            </th>
            {tds}
          </tr>
        );
      })}
    </tbody>
  </Grid>
);

/* ---------- page parts ---------- */

const TopBars = () => (
  <>
    <TitleBar>
      <QuickTools gap={14}>
        <QuickButton aria-label="保存"><SaveIcon /></QuickButton>
        <QuickButton aria-label="撤消"><UndoIcon /><Arrow color="#fff" /></QuickButton>
        <QuickButton aria-label="恢复" faded={1}><UndoIcon flip /><Arrow color="#fff" /></QuickButton>
        <QuickButton aria-label="自定义">
          <Svg w={7} h={9} stroke="#fff"><path d="M1 1.500h5" /><path d="M0 4.500h7L3.500 8z" fill="#fff" stroke="none" /></Svg>
        </QuickButton>
      </QuickTools>
      <DocTitle>新版付款申请表-有公式   [兼容模式]   -   Excel</DocTitle>
      <QuickTools gap={35} end={1}>
        <UserName>Lilith Zhong</UserName>
        <QuickButton aria-label="功能区显示选项">
          <Svg w={13} h={11} stroke="#fff"><path d="M.5 .5h12v10H.5zM.5 3h12M6.500 9V5M4.500 6.500l2-2 2 2" /></Svg>
        </QuickButton>
        <QuickButton aria-label="最小化"><Svg w={11} stroke="#fff"><path d="M0 5.500h11" /></Svg></QuickButton>
        <QuickButton aria-label="还原"><Svg w={11} stroke="#fff"><path d="M.5 2.500h8v8h-8zM2.500 2.500v-2h8v8h-2" /></Svg></QuickButton>
        <QuickButton aria-label="关闭"><Svg w={11} stroke="#fff"><path d="M.5 .5l10 10M10.500 .5l-10 10" /></Svg></QuickButton>
      </QuickTools>
    </TitleBar>
    <TabBar>
      {["文件", "开始", "插入", "页面布局", "公式", "数据", "审阅", "视图", "帮助"].map((name, i) => (
        <Tab key={name} first={i === 0 ? 1 : undefined} active={i === 1 ? 1 : undefined}>{name}</Tab>
      ))}
      <TellMe><BulbIcon />告诉我你想要做什么</TellMe>
      <Share><PersonIcon />共享</Share>
    </TabBar>
  </>
);

const leftLines = [[0, 14], [0, 10], [0, 14], [0, 10]];
const centerLines = [[0, 14], [2, 10], [0, 14], [2, 10]];
const rightLines = [[0, 14], [4, 10], [0, 14], [4, 10]];
const threeLines = [[0, 14], [1, 12], [0, 14]];

const STYLES = [
  ["Millares [0]_l..."], ["Millares_laroux"], ["Moneda [0]_l..."], ["Moneda_laroux"], ["Normal_form..."],
  ["Normal_Pay..."], ["Normal_PAY..."], ["千位[0]_...", 1], ["千位_laroux", 1], ["常规", 1]
];

const RibbonBar = () => (
  <Ribbon>
    <Group w={117}>
      <GroupBody>
        <BigButton w={42} off={1}><BigIcon><PasteIcon /></BigIcon>粘贴<ArrowLine><Arrow color="#b8b8b8" /></ArrowLine></BigButton>
        <Stack w={66} spaced={1}>
          <SmallButton><CutIcon /><span>剪切</span></SmallButton>
          <SmallButton push={4}><CopyIcon /><span>复制</span><Arrow /></SmallButton>
          <SmallButton off={1}><BrushIcon /><span>格式刷</span></SmallButton>
        </Stack>
      </GroupBody>
      <GroupLabel launch={1}>剪贴板</GroupLabel>
      <Launcher aria-label="剪贴板设置"><LaunchIcon /></Launcher>
    </Group>
    <Group w={250}>
      <GroupBody>
        <Rows>
          <ToolRow>
            <Combo w={158}><select aria-label="字体"><option>宋体</option></select><Arrow /></Combo>
            <Combo w={40} joined={1}><select aria-label="字号"><option>10</option></select><Arrow /></Combo>
            <Tool aria-label="增大字号"><GrowIcon /></Tool>
            <Tool aria-label="减小字号"><GrowIcon small /></Tool>
          </ToolRow>
          <ToolRow>
            <Tool bold={1}>B</Tool>
            <Tool italic={1} bold={1}>I</Tool>
            <Tool under={1} bold={1}>U</Tool>
            <Drop />
            <Sep />
            <Tool aria-label="边框"><BordersIcon /></Tool>
            <Drop off />
            <Sep />
            <Tool aria-label="填充颜色"><FillIcon /></Tool>
            <Drop off />
            <Tool aria-label="字体颜色">
              <Svg w={16} h={18}>
                <text x="3" y="12" fontSize="14" fontWeight="700" fill="#555" stroke="none">A</text>
                <path d="M0 14h16v4H0z" fill="#f00" stroke="none" />
              </Svg>
            </Tool>
            <Drop />
            <Sep />
            <Tool aria-label="拼音"><PinyinIcon /></Tool>
            <Drop />
          </ToolRow>
        </Rows>
      </GroupBody>
      <GroupLabel launch={1}>字体</GroupLabel>
      <Launcher aria-label="字体设置"><LaunchIcon /></Launcher>
    </Group>
    <Group w={239}>
      <GroupBody>
        <Rows>
          <ToolRow>
            <Tool off={1} aria-label="顶端对齐"><LinesIcon lines={threeLines} top={2} /></Tool>
            <Tool off={1} aria-label="垂直居中"><LinesIcon lines={threeLines} top={6} /></Tool>
            <Tool off={1} aria-label="底端对齐"><LinesIcon lines={threeLines} top={11} /></Tool>
            <Sep />
            <Tool off={1} aria-label="方向"><SlantIcon /></Tool>
            <Drop off />
          </ToolRow>
          <ToolRow>
            <Tool off={1} aria-label="左对齐"><LinesIcon lines={leftLines} /></Tool>
            <Tool off={1} aria-label="居中"><LinesIcon lines={centerLines} /></Tool>
            <Tool off={1} aria-label="右对齐"><LinesIcon lines={rightLines} /></Tool>
            <Sep />
            <Tool off={1} aria-label="减少缩进"><IndentIcon out /></Tool>
            <Tool off={1} aria-label="增加缩进"><IndentIcon /></Tool>
          </ToolRow>
        </Rows>
        <Sep h={54} m="6px 6px 0 4px" />
        <Rows>
          <SmallButton off={1} h={22}><WrapGlyph /><span>自动换行</span></SmallButton>
          <SmallButton off={1} h={22} push={5}><MergeIcon /><span>合并后居中</span><Arrow color="#b8b8b8" /></SmallButton>
        </Rows>
      </GroupBody>
      <GroupLabel launch={1}>对齐方式</GroupLabel>
      <Launcher off={1} aria-label="对齐设置"><LaunchIcon /></Launcher>
    </Group>
    <Group w={140}>
      <GroupBody>
        <Rows>
          <ToolRow>
            <Combo w={131} off={1}><select aria-label="数字格式"><option>常规</option></select><Arrow color="#aaa" /></Combo>
          </ToolRow>
          <ToolRow>
            <Tool off={1} aria-label="会计数字格式"><MoneyIcon /></Tool>
            <Drop off />
            <Tool off={1} bold={1}>%</Tool>
            <Tool off={1} bold={1}>,</Tool>
            <Sep />
            <Tool off={1} aria-label="增加小数位"><DecimalIcon /></Tool>
            <Tool off={1} aria-label="减少小数位"><DecimalIcon less /></Tool>
          </ToolRow>
        </Rows>
      </GroupBody>
      <GroupLabel launch={1}>数字</GroupLabel>
      <Launcher off={1} aria-label="数字设置"><LaunchIcon /></Launcher>
    </Group>
    <Group w={675}>
      <GroupBody pad={2}>
        <BigButton w={56} off={1}><BigIcon><CondIcon /></BigIcon>条件格式<ArrowLine><Arrow color="#b8b8b8" /></ArrowLine></BigButton>
        <BigButton w={60} off={1}><BigIcon><TableFormatIcon /></BigIcon>套用<ArrowLine>表格格式<Arrow color="#b8b8b8" /></ArrowLine></BigButton>
        <Gallery>
          {STYLES.slice(0, 5).map(([name]) => <StyleCell key={name}>{name}</StyleCell>)}
          <GalleryScroll>
            <button aria-label="向上"><Arrow dir="up" color="#bbb" /></button>
            <button aria-label="向下"><Arrow color="#bbb" /></button>
            <button aria-label="其他"><Svg w={7} h={9} stroke="#bbb"><path d="M0 1.500h7" /><path d="M0 4.500h7L3.500 8z" fill="#bbb" stroke="none" /></Svg></button>
          </GalleryScroll>
          {STYLES.slice(5).map(([name, song]) => <StyleCell key={name} song={song}>{name}</StyleCell>)}
        </Gallery>
      </GroupBody>
      <GroupLabel>样式</GroupLabel>
    </Group>
    <Group w={135}>
      <GroupBody>
        <BigButton w={42} off={1}><BigIcon><InsertCells /></BigIcon>插入<ArrowLine><Arrow color="#b8b8b8" /></ArrowLine></BigButton>
        <BigButton w={42} off={1}><BigIcon><DeleteCells /></BigIcon>删除<ArrowLine><Arrow color="#b8b8b8" /></ArrowLine></BigButton>
        <BigButton w={42}><BigIcon><FormatCells /></BigIcon>格式<ArrowLine><Arrow /></ArrowLine></BigButton>
      </GroupBody>
      <GroupLabel>单元格</GroupLabel>
    </Group>
    <Group w={229}>
      <GroupBody pad={6}>
        <Stack w={88}>
          <SmallButton push={5}><SumIcon /><span>自动求和</span><Arrow /></SmallButton>
          <SmallButton off={1}><FillDownIcon /><span>填充</span><Arrow color="#b8b8b8" /></SmallButton>
          <SmallButton><EraserIcon /><span>清除</span><Arrow /></SmallButton>
        </Stack>
        <BigButton w={64} off={1}><BigIcon><SortIcon /></BigIcon>排序和筛选<ArrowLine><Arrow color="#b8b8b8" /></ArrowLine></BigButton>
        <BigButton w={66}><BigIcon><FindIcon /></BigIcon>查找和选择<ArrowLine><Arrow /></ArrowLine></BigButton>
      </GroupBody>
      <GroupLabel>编辑</GroupLabel>
    </Group>
    <CollapseButton aria-label="折叠功能区"><Chevron up sw={2} /></CollapseButton>
  </Ribbon>
);

const FormulaLine = () => (
  <FormulaBar>
    <NameBox><input aria-label="名称框" defaultValue="M15" /><Arrow s={8} /></NameBox>
    <Dots m="9px 14px 0" />
    <FormulaButtons>
      <button aria-label="取消"><Svg w={12} stroke="#777" strokeWidth="2"><path d="M1 1l10 10M11 1L1 11" /></Svg></button>
      <button aria-label="输入"><Svg w={13} h={12} stroke="#777" strokeWidth="2.500"><path d="M1 7l4 3.500L12 1" /></Svg></button>
      <FxButton>f<sub>x</sub></FxButton>
    </FormulaButtons>
    <FormulaInput>
      <textarea aria-label="编辑栏" defaultValue="中国y" />
      <button aria-label="展开编辑栏"><Chevron up s={8} sw={2} /></button>
    </FormulaInput>
  </FormulaBar>
);

const BottomBars = () => (
  <>
    <SheetTabs>
      <SheetNav><Arrow dir="left" color="#bbb" s={8} /><Arrow dir="right" color="#bbb" s={8} /></SheetNav>
      <SheetTab>1</SheetTab>
      <AddSheet aria-label="新工作表">
        <Svg w={17} stroke="#808080"><circle cx="8.500" cy="8.500" r="7.500" /><path d="M8.500 4.500v8M4.500 8.500h8" strokeWidth="2" /></Svg>
      </AddSheet>
      <Dots m="8px 0 0 auto" />
      <HScroll>
        <ScrollButton aria-label="向左滚动"><Arrow dir="left" s={8} /></ScrollButton>
        <HTrack><div /></HTrack>
        <ScrollButton aria-label="向右滚动"><Arrow dir="right" s={8} /></ScrollButton>
      </HScroll>
    </SheetTabs>
    <StatusBar>
      输入
      <ViewButtons>
        <button aria-label="普通"><ViewIcon kind="grid" /></button>
        <button aria-label="页面布局"><ViewIcon kind="page" /></button>
        <button aria-label="分页预览"><ViewIcon kind="split" /></button>
      </ViewButtons>
      <button aria-label="缩小"><Svg w={7} stroke="#555" strokeWidth="2"><path d="M0 3.500h7" /></Svg></button>
      <ZoomSlider type="range" aria-label="显示比例" />
      <button aria-label="放大"><Svg w={7} stroke="#555" strokeWidth="2"><path d="M0 3.500h7M3.500 0v7" /></Svg></button>
      <ZoomValue>100%</ZoomValue>
    </StatusBar>
  </>
);

const APPS = [
  ["任务视图", TaskViewIcon, false], ["文件资源管理器", ExplorerIcon, true], ["Edge", EdgeIcon, true],
  ["应用商店", StoreIcon, false], ["计算器", CalcIcon, true], ["微信", WeChatIcon, true],
  ["Chrome", ChromeIcon, true], ["财务", YenIcon, true], ["Excel", ExcelIcon, true]
];

const TaskbarRow = () => (
  <Taskbar>
    <Weather><CloudIcon /><span>11°C<small>阴</small></span></Weather>
    <Apps>
      <button aria-label="开始"><StartIcon /></button>
      <Search>
        <Svg w={16} stroke="#222" strokeWidth="1.800"><circle cx="7" cy="7" r="5.500" /><path d="M11 11l4 4" /></Svg>
        <input aria-label="搜索" placeholder="搜索" />
        <HatsIcon />
      </Search>
      {APPS.map(([name, Icon, open]) => (
        <AppButton key={name} aria-label={name} open={open ? 1 : undefined} alert={name === "微信" ? 1 : undefined}><Icon /></AppButton>
      ))}
    </Apps>
    <Tray>
      <TrayButton w={34} aria-label="显示隐藏的图标"><Chevron up color="#222" sw={1.3} /></TrayButton>
      <TrayButton w={30} aria-label="同步"><SyncIcon /></TrayButton>
      <TrayButton w={34}>中</TrayButton>
      <TrayButton w={42}>拼</TrayButton>
      <TrayButton w={32} aria-label="网络"><ScreenIcon /></TrayButton>
      <TrayButton w={18} aria-label="音量"><VolumeIcon /></TrayButton>
      <Clock>{"12:42\n2025/12/16"}</Clock>
    </Tray>
  </Taskbar>
);

const App = () => (
  <Window>
    <GlobalStyle />
    <TopBars />
    <RibbonBar />
    <FormulaLine />
    <SheetArea>
      <SheetView><Sheet /></SheetView>
      <VScroll>
        <ScrollButton aria-label="向上滚动"><Arrow dir="up" s={8} /></ScrollButton>
        <VTrack><div /></VTrack>
        <ScrollButton aria-label="向下滚动"><Arrow s={8} /></ScrollButton>
      </VScroll>
    </SheetArea>
    <BottomBars />
    <TaskbarRow />
  </Window>
);

export default App;
